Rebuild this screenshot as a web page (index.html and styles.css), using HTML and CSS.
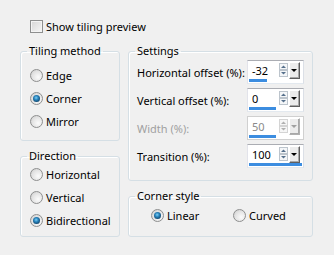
FILE: index.html
```html
<!DOCTYPE html>
<html>
<head>
<meta charset="utf-8">
<link rel="stylesheet" href="styles.css">
</head>
<body>
<div class="dialog">
  <label class="check-row"><span class="checkbox"></span><span>Show tiling preview</span></label>
  <div class="columns">
    <div class="col">
      <fieldset class="group tiling">
        <legend>Tiling method</legend>
        <div class="radio-list">
          <label class="radio-row"><span class="radio"></span>Edge</label>
          <label class="radio-row"><span class="radio checked"></span>Corner</label>
          <label class="radio-row"><span class="radio"></span>Mirror</label>
        </div>
      </fieldset>
      <fieldset class="group direction">
        <legend>Direction</legend>
        <div class="radio-list">
          <label class="radio-row"><span class="radio"></span>Horizontal</label>
          <label class="radio-row"><span class="radio"></span>Vertical</label>
          <label class="radio-row"><span class="radio checked"></span>Bidirectional</label>
        </div>
      </fieldset>
    </div>
    <div class="col">
      <fieldset class="group settings">
        <legend>Settings</legend>
        <div class="setting-list">
          <div class="setting-row">
            <span>Horizontal offset (%):</span>
            <div class="spin">
              <div class="spin-top">
                <span class="spin-value">-32</span>
                <svg class="spin-arrows" width="9" height="14" viewBox="0 0 9 14"><rect x="0.5" y="0.5" width="8" height="6" fill="#f4f6f8" stroke="#bcc4cc"/><rect x="0.5" y="7.5" width="8" height="6" fill="#f4f6f8" stroke="#bcc4cc"/><path d="M2 5h5L4.5 2.5z" fill="#56708c"/><path d="M2 9h5l-2.5 2.5z" fill="#56708c"/></svg>
                <span class="drop-btn"><span class="tri"></span></span>
              </div>
              <div class="bar-track"><div class="bar" style="width:34%"></div></div>
            </div>
          </div>
          <div class="setting-row">
            <span>Vertical offset (%):</span>
            <div class="spin">
              <div class="spin-top">
                <span class="spin-value">0</span>
                <svg class="spin-arrows" width="9" height="14" viewBox="0 0 9 14"><rect x="0.5" y="0.5" width="8" height="6" fill="#f4f6f8" stroke="#bcc4cc"/><rect x="0.5" y="7.5" width="8" height="6" fill="#f4f6f8" stroke="#bcc4cc"/><path d="M2 5h5L4.5 2.5z" fill="#56708c"/><path d="M2 9h5l-2.5 2.5z" fill="#56708c"/></svg>
                <span class="drop-btn"><span class="tri"></span></span>
              </div>
              <div class="bar-track"><div class="bar" style="width:50%"></div></div>
            </div>
          </div>
          <div class="setting-row disabled">
            <span>Width (%):</span>
            <div class="spin">
              <div class="spin-top">
                <span class="spin-value">50</span>
                <svg class="spin-arrows" width="9" height="14" viewBox="0 0 9 14"><rect x="0.5" y="0.5" width="8" height="6" fill="#f6f6f6" stroke="#d4d4d4"/><rect x="0.5" y="7.5" width="8" height="6" fill="#f6f6f6" stroke="#d4d4d4"/><path d="M2 5h5L4.5 2.5z" fill="#b0b0b0"/><path d="M2 9h5l-2.5 2.5z" fill="#b0b0b0"/></svg>
                <span class="drop-btn"><span class="tri"></span></span>
              </div>
              <div class="bar-track"><div class="bar" style="width:50%"></div></div>
            </div>
          </div>
          <div class="setting-row">
            <span>Transition (%):</span>
            <div class="spin">
              <div class="spin-top">
                <span class="spin-value">100</span>
                <svg class="spin-arrows" width="9" height="14" viewBox="0 0 9 14"><rect x="0.5" y="0.5" width="8" height="6" fill="#f4f6f8" stroke="#bcc4cc"/><rect x="0.5" y="7.5" width="8" height="6" fill="#f4f6f8" stroke="#bcc4cc"/><path d="M2 5h5L4.5 2.5z" fill="#56708c"/><path d="M2 9h5l-2.5 2.5z" fill="#56708c"/></svg>
                <span class="drop-btn"><span class="tri"></span></span>
              </div>
              <div class="bar-track"><div class="bar" style="width:100%"></div></div>
            </div>
          </div>
        </div>
      </fieldset>
      <fieldset class="group corner">
        <legend>Corner style</legend>
        <div class="radio-inline">
          <label class="radio-row linear"><span class="radio checked"></span>Linear</label>
          <label class="radio-row"><span class="radio"></span>Curved</label>
        </div>
      </fieldset>
    </div>
  </div>
</div>
</body>
</html>
```
FILE: styles.css
```css
html, body {
  margin: 0;
  padding: 0;
}
body {
  background: #f0f0f0;
  font-family: "Noto Sans", sans-serif;
  font-size: 11px;
  color: #000;
  width: 334px;
  height: 255px;
  overflow: hidden;
}
.dialog {
  padding: 19px 0 0 20px;
}
.check-row {
  display: flex;
  align-items: center;
  gap: 3px;
  height: 14px;
  margin-left: 10px;
}
.checkbox {
  width: 13px;
  height: 13px;
  box-sizing: border-box;
  border: 1px solid #8e8f8f;
  background: linear-gradient(135deg, #d6d6d6, #f7f7f7);
  box-shadow: inset 0 0 0 1px #f4f4f4;
}
.columns {
  display: grid;
  grid-template-columns: 100px 185px;
  column-gap: 8px;
  margin-top: 11px;
  align-items: start;
}
.col {
  display: flex;
  flex-direction: column;
  gap: 8px;
}
.group {
  margin: 0;
  padding: 0;
  min-width: 0;
  border: 1px solid #d5dfe5;
  border-radius: 3px;
  box-shadow: inset 1px 1px 0 #fff;
}
.group legend {
  margin-left: 6px;
  padding: 0 2px;
  line-height: 14px;
  height: 14px;
}
.radio-list {
  display: flex;
  flex-direction: column;
  gap: 7px;
  padding-left: 9px;
}
.tiling .radio-list {
  padding-top: 9px;
  padding-bottom: 11px;
}
.direction .radio-list {
  padding-top: 3px;
  padding-bottom: 8px;
}
.radio-row {
  display: flex;
  align-items: center;
  gap: 3px;
  height: 16px;
}
.radio {
  width: 13px;
  height: 13px;
  box-sizing: border-box;
  border-radius: 50%;
  border: 1px solid #8e8f8f;
  background: radial-gradient(circle at 65% 65%, #fbfbfb 0%, #e4e4e4 55%, #c9c9c9 100%);
  display: flex;
  align-items: center;
  justify-content: center;
}
.radio.checked::after {
  content: "";
  width: 7px;
  height: 7px;
  border-radius: 50%;
  background: radial-gradient(circle at 45% 40%, #7fd0f5 0%, #2a86bf 35%, #0d3e63 80%, #072b48 100%);
}
.settings .setting-list {
  display: flex;
  flex-direction: column;
  gap: 4px;
  padding: 2px 8px 12px 8px;
}
.setting-row {
  display: flex;
  align-items: center;
  justify-content: space-between;
  height: 24px;
}
.setting-row.disabled {
  color: #a0a0a0;
}
.spin {
  width: 57px;
  height: 24px;
  box-sizing: border-box;
  border: 1px solid #abadb3;
  border-color: #abadb3 #dbdfe6 #e3e9ef #e2e3ea;
  background: #fff;
  display: flex;
  flex-direction: column;
  padding-bottom: 1px;
}
.disabled .spin {
  border-color: #d0d0d0;
}
.spin-top {
  flex: 1;
  display: flex;
  align-items: center;
}
.spin-value {
  flex: 1;
  padding-left: 4px;
}
.disabled .spin-value {
  color: #8a8a8a;
}
.spin-arrows {
  display: block;
  margin-right: 1px;
}
.drop-btn {
  width: 11px;
  height: 17px;
  box-sizing: border-box;
  margin-right: 3px;
  border-top: 1px solid #fff;
  border-left: 1px solid #fff;
  border-right: 1px solid #5f5f5f;
  border-bottom: 1px solid #5f5f5f;
  background: #ececec;
  box-shadow: inset -1px -1px 0 #a8a8a8;
  display: flex;
  align-items: center;
  justify-content: center;
}
.tri {
  width: 0;
  height: 0;
  border-left: 3px solid transparent;
  border-right: 3px solid transparent;
  border-top: 3px solid #000;
  margin-right: 1px;
}
.disabled .drop-btn {
  border-right-color: #b0b0b0;
  border-bottom-color: #b0b0b0;
}
.disabled .tri {
  border-top-color: #a0a0a0;
}
.bar-track {
  height: 3px;
  padding: 0 1px;
}
.bar {
  height: 3px;
  background: #3c8de0;
}
.radio-inline {
  display: flex;
  padding: 4px 0 13px 22px;
}
.radio-inline .linear {
  width: 82px;
}
```
